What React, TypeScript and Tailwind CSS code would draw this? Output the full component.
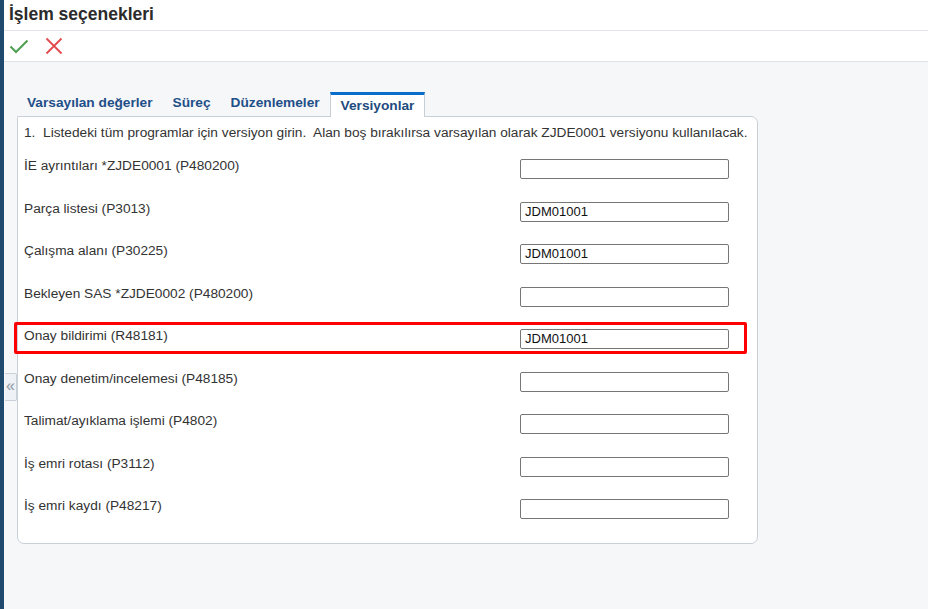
import React from 'react';

const rows = [
  { label: 'İE ayrıntıları *ZJDE0001 (P480200)', value: '' },
  { label: 'Parça listesi (P3013)', value: 'JDM01001' },
  { label: 'Çalışma alanı (P30225)', value: 'JDM01001' },
  { label: 'Bekleyen SAS *ZJDE0002 (P480200)', value: '' },
  { label: 'Onay bildirimi (R48181)', value: 'JDM01001', highlight: true },
  { label: 'Onay denetim/incelemesi (P48185)', value: '' },
  { label: 'Talimat/ayıklama işlemi (P4802)', value: '' },
  { label: 'İş emri rotası (P3112)', value: '' },
  { label: 'İş emri kaydı (P48217)', value: '' },
];

const tabs = ['Varsayılan değerler', 'Süreç', 'Düzenlemeler', 'Versiyonlar'];

export default function App() {
  return (
    <div
      className="flex h-[609px] w-full overflow-hidden text-[#333]"
      style={{ fontFamily: '"Liberation Sans", Arial, sans-serif' }}
    >
      <div className="w-[4px] shrink-0 bg-[#1f4a6e]" />
      <div className="relative flex flex-1 flex-col bg-[#f6f7f9]">
        {/* header */}
        <div className="flex h-[31px] items-center border-b border-[#e1e4e8] bg-white pl-[5px]">
          <h1 className="text-[17.5px] font-bold leading-none text-[#2b2b2b]">İşlem seçenekleri</h1>
        </div>
        {/* toolbar */}
        <div className="flex h-[31px] items-center gap-[16px] border-b border-[#dfe2e6] bg-white pl-[5px]">
          <svg width="20" height="16" viewBox="0 0 20 16" fill="none">
            <path d="M1.5 8.5 L7 14 L18.5 2.5" stroke="#4f9e50" strokeWidth="2" />
          </svg>
          <svg width="18" height="18" viewBox="0 0 18 18" fill="none">
            <path d="M1.5 1.5 L16.5 16.5 M16.5 1.5 L1.5 16.5" stroke="#e5484d" strokeWidth="1.8" />
          </svg>
        </div>

        {/* collapse handle */}
        <div className="absolute left-[1px] top-[373px] flex h-[28px] w-[12px] items-center justify-center rounded-r-[2px] border border-l-0 border-[#c9d0d8] bg-[#eef1f5] pb-[2px] text-[16px] leading-none text-[#8d96a0]">
          «
        </div>

        <div className="pl-[13px] pt-[30px]">
          {/* tabs */}
          <div className="flex h-[24px] items-end">
            {tabs.map((t, i) =>
              i === 3 ? (
                <div
                  key={t}
                  className="relative z-10 -mb-px flex h-[25px] items-center border-x border-t-[3px] border-x-[#c7ced6] border-t-[#0a6ecd] bg-white px-[10px] pt-[1px] text-[13.7px] font-bold text-[#1d4b7e]"
                >
                  {t}
                </div>
              ) : (
                <div
                  key={t}
                  className="flex h-[24px] items-center px-[10px] pb-[2px] text-[13.7px] font-bold text-[#1f4f88]"
                >
                  {t}
                </div>
              )
            )}
          </div>

          {/* panel */}
          <div className="w-[741px] rounded-b-[7px] rounded-tr-[7px] border border-[#c9d0d8] bg-white pl-[6px] pr-[7px] pb-[12px]">
            <div className="flex h-[31px] items-center whitespace-pre pt-[1px] text-[13.7px] text-[#333]">
              {'1.  Listedeki tüm programlar için versiyon girin.  Alan boş bırakılırsa varsayılan olarak ZJDE0001 versiyonu kullanılacak.'}
            </div>
            {rows.map((r) => (
              <div key={r.label} className="relative flex h-[42.5px] items-start">
                <div className="w-[496px] pt-[10px] text-[13.7px] leading-[16px] text-[#333]">{r.label}</div>
                <div className="mt-[11px] flex h-[20px] w-[209px] items-center rounded-[2px] border border-[#767676] bg-white px-[4px] text-[13px] text-[#111]">
                  {r.value}
                </div>
                {r.highlight && (
                  <div className="pointer-events-none absolute left-[-10px] right-[3px] top-[4px] h-[32px] rounded-[2px] border-[3px] border-[#ff0000]" />
                )}
              </div>
            ))}
          </div>
        </div>
      </div>
    </div>
  );
}
